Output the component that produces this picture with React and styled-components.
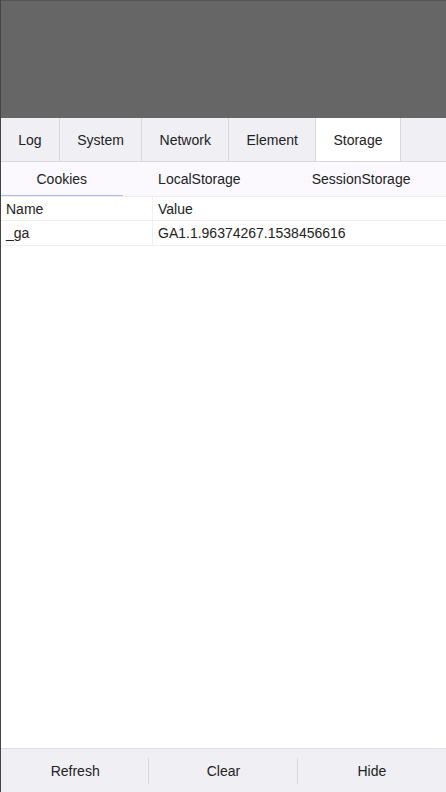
import styled, { createGlobalStyle } from "styled-components";

const Global = createGlobalStyle`
  html, body { margin: 0; padding: 0; height: 100%; }
  body {
    font-family: "Liberation Sans", Arial, sans-serif;
    font-size: 14px;
    color: #222;
    background: #fff;
  }
  #root { height: 100%; }
`;

const tabs = ["Log", "System", "Network", "Element", "Storage"];
const subTabs = ["Cookies", "LocalStorage", "SessionStorage"];
const rows = [{ name: "_ga", value: "GA1.1.96374267.1538456616" }];

const App = () => {
  return (
    <Screen>
      <Global />
      <Mask />
      <Panel>
        <TabBar>
          {tabs.map((t) => (
            <Tab key={t} active={t === "Storage"}>
              {t}
            </Tab>
          ))}
        </TabBar>
        <TopBar>
          {subTabs.map((t) => (
            <SubTab key={t} active={t === "Cookies"}>
              {t}
            </SubTab>
          ))}
        </TopBar>
        <Content>
          <Row head>
            <NameCell>Name</NameCell>
            <ValueCell>Value</ValueCell>
          </Row>
          {rows.map((r) => (
            <Row key={r.name}>
              <NameCell>{r.name}</NameCell>
              <ValueCell>{r.value}</ValueCell>
            </Row>
          ))}
        </Content>
        <ToolBar>
          <ToolButton>Refresh</ToolButton>
          <ToolButton>Clear</ToolButton>
          <ToolButton last>Hide</ToolButton>
        </ToolBar>
      </Panel>
    </Screen>
  );
};

const Screen = styled.div`
  height: 100vh;
  display: flex;
  flex-direction: column;
  border-left: 1px solid #444;
  box-sizing: border-box;
`;

const Mask = styled.div`
  flex: 1;
  background: #666;
  border-top: 1px solid #555;
`;

const Panel = styled.div`
  height: 674px;
  display: flex;
  flex-direction: column;
  background: #fff;
`;

const TabBar = styled.div`
  display: flex;
  height: 44px;
  background: #efeff4;
  border-bottom: 1px solid #d9d9d9;
  box-sizing: border-box;
`;

const Tab = styled.div`
  display: flex;
  align-items: center;
  padding: 0 17.3px;
  border-right: 1px solid #d9d9d9;
  background: ${(p) => (p.active ? "#fff" : "transparent")};
`;

const TopBar = styled.div`
  display: flex;
  height: 35px;
  background: #fbf9fe;
  border-bottom: 1px solid #eeeeee;
  box-sizing: border-box;
`;

const SubTab = styled.div`
  flex: 1 1 auto;
  display: flex;
  align-items: center;
  justify-content: center;
  box-shadow: ${(p) => (p.active ? "inset 0 -1px 0 #a7bff6" : "none")};
`;

const Content = styled.div`
  flex: 1;
`;

const Row = styled.div`
  display: flex;
  height: ${(p) => (p.head ? "24px" : "25px")};
  border-bottom: 1px solid #f0f0f0;
  box-sizing: border-box;
`;

const NameCell = styled.div`
  width: 152px;
  flex: none;
  padding: 0 5px;
  box-sizing: border-box;
  display: flex;
  align-items: center;
  border-right: 1px solid #f0f0f0;
`;

const ValueCell = styled.div`
  flex: 1;
  padding: 0 5px;
  display: flex;
  align-items: center;
`;

const ToolBar = styled.div`
  display: flex;
  height: 44px;
  background: #efeff4;
  border-top: 1px solid #e0e0e0;
  box-sizing: border-box;
`;

const ToolButton = styled.div`
  flex: 1;
  display: flex;
  align-items: center;
  justify-content: center;
  position: relative;
  &::after {
    content: "";
    display: ${(p) => (p.last ? "none" : "block")};
    position: absolute;
    right: 0;
    top: 9px;
    bottom: 8px;
    width: 1px;
    background: #d9d9d9;
  }
`;

export default App;
